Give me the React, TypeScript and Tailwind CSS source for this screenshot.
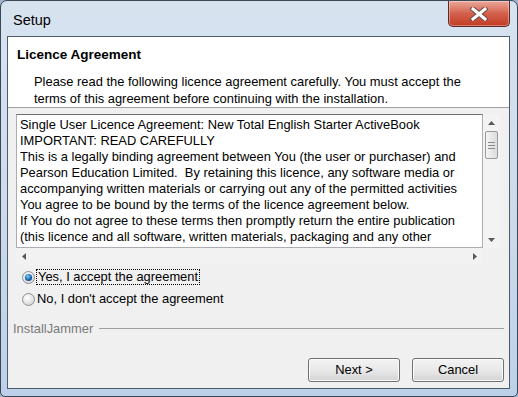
const licenceLines = [
  "Single User Licence Agreement: New Total English Starter ActiveBook",
  "IMPORTANT: READ CAREFULLY",
  "This is a legally binding agreement between You (the user or purchaser) and",
  "Pearson Education Limited.\u00a0 By retaining this licence, any software media or",
  "accompanying written materials or carrying out any of the permitted activities",
  "You agree to be bound by the terms of the licence agreement below.",
  "If You do not agree to these terms then promptly return the entire publication",
  "(this licence and all software, written materials, packaging and any other",
];

const CloseButton = () => (
  <div className="flex h-[26px] w-[62px] items-center justify-center rounded-b-[5px] border border-t-0 border-[#5b2a26] bg-gradient-to-b from-[#e9a99b] via-[#d3604c] to-[#c23b22] shadow-[inset_0_0_0_1px_rgba(255,255,255,0.35)]">
    <svg width="18" height="14" viewBox="0 0 18 14">
      <path d="M3 2 L15 12 M15 2 L3 12" stroke="#6b4a46" strokeWidth="5" strokeLinecap="square" />
      <path d="M3 2 L15 12 M15 2 L3 12" stroke="#ffffff" strokeWidth="3" strokeLinecap="square" />
    </svg>
  </div>
);

const Arrow = ({ dir }: { dir: "up" | "down" | "left" | "right" }) => {
  const pts = {
    up: "0,4 3.5,0 7,4",
    down: "0,0 3.5,4 7,0",
    left: "4,0 0,3.5 4,7",
    right: "0,0 4,3.5 0,7",
  }[dir];
  const vertical = dir === "up" || dir === "down";
  return (
    <svg width={vertical ? 7 : 4} height={vertical ? 4 : 7} viewBox={vertical ? "0 0 7 4" : "0 0 4 7"}>
      <polygon points={pts} fill="#5a5a5a" />
    </svg>
  );
};

const Radio = ({ checked }: { checked?: boolean }) => (
  <svg width="13" height="13" viewBox="0 0 13 13">
    <defs>
      <radialGradient id="rbg" cx="0.4" cy="0.35" r="0.7">
        <stop offset="0" stopColor="#ffffff" />
        <stop offset="1" stopColor="#d4d4d4" />
      </radialGradient>
      <radialGradient id="rdot" cx="0.4" cy="0.35" r="0.7">
        <stop offset="0" stopColor="#8fd0f6" />
        <stop offset="0.5" stopColor="#2a7fc9" />
        <stop offset="1" stopColor="#0e3f7a" />
      </radialGradient>
    </defs>
    <circle cx="6.5" cy="6.5" r="6" fill="url(#rbg)" stroke="#8c8f94" strokeWidth="1" />
    {checked && <circle cx="6.5" cy="6.5" r="3.6" fill="url(#rdot)" />}
  </svg>
);

const WinButton = ({ children }: { children: React.ReactNode }) => (
  <button
    type="button"
    className="flex h-[24px] w-[92px] items-center justify-center rounded-[3px] border border-[#707070] bg-gradient-to-b from-[#f3f3f3] via-[#e9e9e9] to-[#d4d4d4] text-[12.9px] text-black shadow-[inset_0_0_0_1px_#fbfbfb]"
  >
    {children}
  </button>
);

export default function App() {
  return (
    <div className="h-[397px] w-[518px] overflow-hidden bg-[#9fb4cc] font-['Liberation_Sans',Arial,sans-serif]">
      <div className="flex h-full w-full flex-col rounded-t-[7px] rounded-b-[5px] border border-[#3b4756] bg-gradient-to-b from-[#d8e3f0] via-[#cddbeb] to-[#bcd1e9] pl-[6px] pr-[7px] pb-[7px]">
        {/* title bar */}
        <div className="flex h-[35px] items-start justify-between">
          <span className="pl-[6px] pt-[10px] text-[14.5px] leading-[18px] text-black">Setup</span>
          <CloseButton />
        </div>

        {/* client area */}
        <div className="flex flex-1 flex-col border border-[#4e5b6b] bg-[#f0f0f0]">
          <div className="h-[71px] border-b border-[#a0a0a0] bg-white">
            <div className="pl-[9px] pt-[10px] text-[13.5px] font-bold leading-[16px] text-black">Licence Agreement</div>
            <div className="mt-[10px] pl-[26px] text-[12.9px] leading-[17px] text-black">
              <div>Please read the following licence agreement carefully. You must accept the</div>
              <div>terms of this agreement before continuing with the installation.</div>
            </div>
          </div>

          <div className="flex flex-1 flex-col pl-[8px] pr-[5px] pt-[6px]">
            {/* licence text box */}
            <div className="flex">
              <div className="flex w-[467px] flex-col">
                <div className="h-[134px] overflow-hidden border border-[#abadb3] border-t-[#6f6f6f] bg-white pl-[3px] pt-[2px] text-[12.9px] leading-[16px] text-black">
                  {licenceLines.map((line) => (
                    <div key={line} className="whitespace-nowrap">
                      {line}
                    </div>
                  ))}
                </div>
                <div className="flex h-[17px] items-center justify-between bg-[#f2f2f2] px-[6px]">
                  <Arrow dir="left" />
                  <Arrow dir="right" />
                </div>
              </div>
              <div className="flex h-[134px] w-[17px] flex-col items-center bg-[#f3f3f3] pt-[7px]">
                <Arrow dir="up" />
                <div className="mt-[6px] flex h-[28px] w-[13px] flex-col items-center justify-center gap-[2px] rounded-[2px] border border-[#9a9a9a] bg-gradient-to-r from-[#f4f4f4] to-[#dcdcdc]">
                  <div className="h-px w-[7px] bg-[#8a8a8a]" />
                  <div className="h-px w-[7px] bg-[#8a8a8a]" />
                  <div className="h-px w-[7px] bg-[#8a8a8a]" />
                </div>
                <div className="flex-1" />
                <div className="mb-[6px]">
                  <Arrow dir="down" />
                </div>
              </div>
            </div>

            {/* radios */}
            <div className="mt-[1px] pl-[6px] text-[12.9px] text-black">
              <div className="flex h-[22px] items-center gap-[1px]">
                <Radio checked />
                <span className="border border-dotted border-black px-[1px] leading-[14px]">Yes, I accept the agreement</span>
              </div>
              <div className="flex h-[22px] items-center gap-[2px]">
                <Radio />
                <span className="leading-[14px]">No, I don't accept the agreement</span>
              </div>
            </div>
          </div>

          <div className="mt-[11px] flex h-[16px] items-center gap-[6px] pl-[5px] pr-[5px]">
            <span className="text-[12.9px] text-[#7a7a7a]">InstallJammer</span>
            <div className="h-[2px] flex-1 border-t border-[#a0a0a0] border-b-white" />
          </div>

          <div className="mt-[21px] mb-[6px] flex justify-end gap-[12px] pr-[5px]">
            <WinButton>Next &gt;</WinButton>
            <WinButton>Cancel</WinButton>
          </div>
        </div>
      </div>
    </div>
  );
}
